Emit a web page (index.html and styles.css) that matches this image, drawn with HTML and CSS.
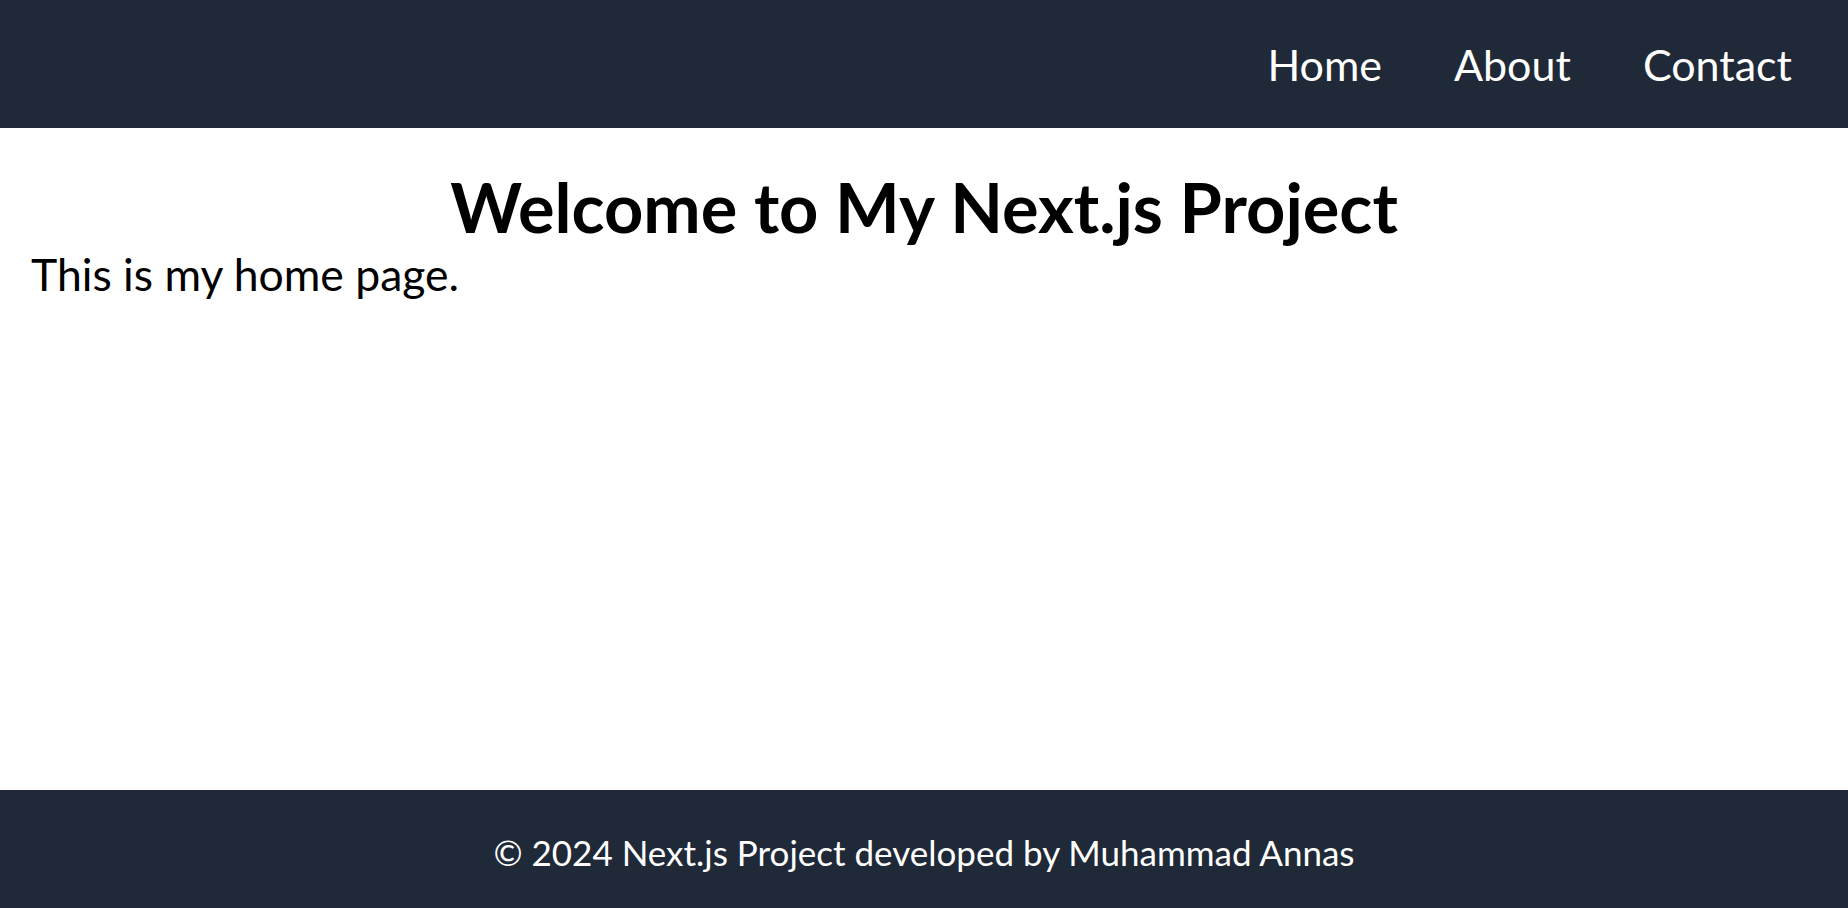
FILE: index.html
```html
<!DOCTYPE html>
<html lang="en">
<head>
<meta charset="utf-8">
<title>My Next.js Project</title>
<link rel="stylesheet" href="styles.css">
</head>
<body>
<div class="page">
  <header class="site-header">
    <nav class="nav">
      <a class="nav-link" href="#">Home</a>
      <a class="nav-link" href="#">About</a>
      <a class="nav-link" href="#">Contact</a>
    </nav>
  </header>
  <main class="main">
    <h1 class="title">Welcome to My Next.js Project</h1>
    <p class="intro">This is my home page.</p>
  </main>
  <footer class="site-footer">
    <p class="copy">© 2024 Next.js Project developed by Muhammad Annas</p>
  </footer>
</div>
</body>
</html>
```
FILE: styles.css
```css
* { box-sizing: border-box; }
html, body { margin: 0; padding: 0; }
body {
  font-family: "Lato", "Open Sans", sans-serif;
  color: #000;
  background: #fff;
}
.page {
  min-height: 100vh;
  display: flex;
  flex-direction: column;
}
.site-header {
  background: #1f2937;
  height: 128px;
  display: flex;
  align-items: center;
  justify-content: flex-end;
  padding: 2px 56px 0 0;
}
.nav {
  display: flex;
  gap: 72px;
}
.nav-link {
  color: #fff;
  text-decoration: none;
  font-size: 43px;
  line-height: 1.2;
}
.main {
  flex: 1;
  padding: 38px 31px 0;
}
.title {
  margin: 0;
  text-align: center;
  font-size: 68.5px;
  font-weight: 700;
  line-height: 1.2;
}
.intro {
  margin: -1px 0 0;
  font-size: 44.5px;
  line-height: 1.2;
}
.site-footer {
  background: #1f2937;
  height: 118px;
  display: flex;
  align-items: center;
  justify-content: center;
  padding-top: 5px;
}
.copy {
  margin: 0;
  color: #fff;
  font-size: 35px;
  line-height: 1.2;
}
```
